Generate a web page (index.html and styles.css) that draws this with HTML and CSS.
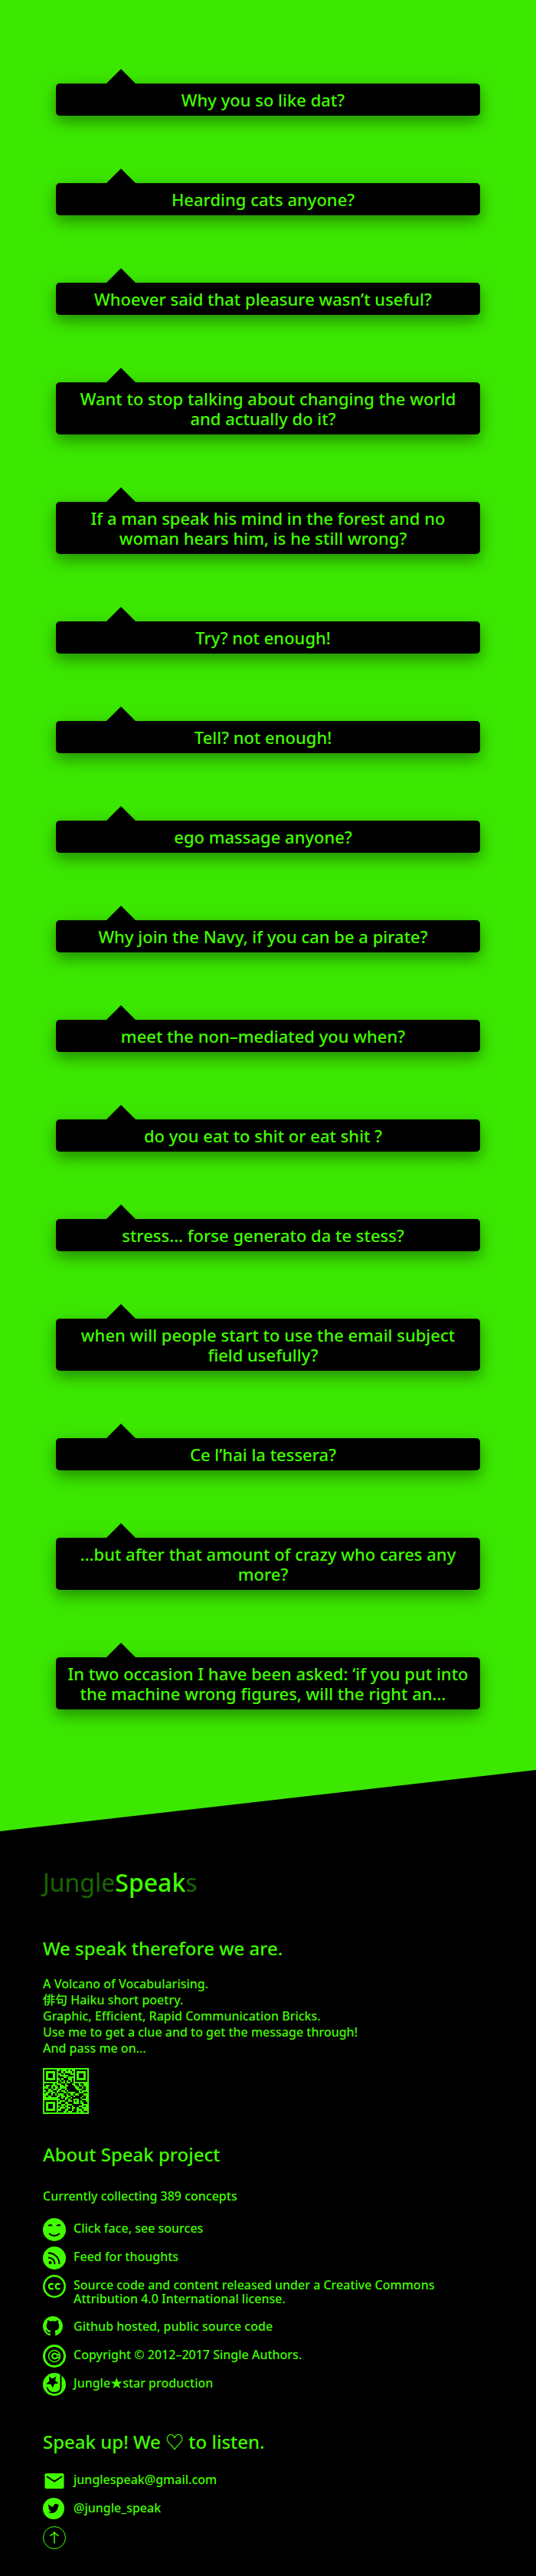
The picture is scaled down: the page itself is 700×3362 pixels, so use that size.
FILE: index.html
```html
<!DOCTYPE html>
<html lang="en">
<head>
<meta charset="utf-8">
<meta name="viewport" content="width=device-width, initial-scale=1">
<title>JungleSpeaks</title>
<link rel="stylesheet" href="styles.css">
</head>
<body>
<main class="speaks">
  <a class="bubble" href="#">Why you so like dat?</a>
  <a class="bubble" href="#">Hearding cats anyone?</a>
  <a class="bubble" href="#">Whoever said that pleasure wasn’t useful?</a>
  <a class="bubble" href="#">Want to stop talking about changing the world and actually do it?</a>
  <a class="bubble" href="#">If a man speak his mind in the forest and no woman hears him, is he still wrong?</a>
  <a class="bubble" href="#">Try? not enough!</a>
  <a class="bubble" href="#">Tell? not enough!</a>
  <a class="bubble" href="#">ego massage anyone?</a>
  <a class="bubble" href="#">Why join the Navy, if you can be a pirate?</a>
  <a class="bubble" href="#">meet the non–mediated you when?</a>
  <a class="bubble" href="#">do you eat to shit or eat shit ?</a>
  <a class="bubble" href="#">stress… forse generato da te stess?</a>
  <a class="bubble" href="#">when will people start to use the email subject field usefully?</a>
  <a class="bubble" href="#">Ce l’hai la tessera?</a>
  <a class="bubble" href="#">…but after that amount of crazy who cares any more?</a>
  <a class="bubble" href="#">In two occasion I have been asked: ‘if you put into the machine wrong figures, will the right an…</a>
</main>
<footer class="footer">
  <h1 class="logo">Jungle<span class="logo-strong">Speak</span>s</h1>

  <section class="section">
    <h2 class="title">We speak therefore we are.</h2>
    <p class="text">A Volcano of Vocabularising.<br>俳句 Haiku short poetry.<br>Graphic, Efficient, Rapid Communication Bricks.<br>Use me to get a clue and to get the message through!<br>And pass me on…</p>
    <svg class="qr" viewBox="0 0 27 27" role="img" aria-label="QR code">
      <rect class="fill" width="27" height="27"/>
      <g class="finder">
        <path d="M1.5 1.5h6v6h-6zM19.5 1.5h6v6h-6zM1.5 19.5h6v6h-6z"/>
        <path d="M3 4.5h3M21 4.5h3M3 22.5h3" stroke-width="3"/>
        <path d="M17.5 17.5h4v4h-4zM19 19.5h1"/>
      </g>
      <path class="modules" d="M10 1.5h1M14 1.5h1M16 1.5h1M9 2.5h2M12 2.5h1M17 2.5h1M11 3.5h1M13 3.5h3M9 4.5h1M15 4.5h3M9 5.5h3M14 5.5h1M10 6.5h1M12 6.5h3M17 6.5h1M9 7.5h1M11 7.5h1M13 7.5h1M15 7.5h1M17 7.5h1M9 8.5h2M13 8.5h1M16 8.5h2
      M1 9.5h5M7 9.5h1M11 9.5h2M14 9.5h3M19 9.5h2M22 9.5h2M1 10.5h1M4 10.5h1M8 10.5h2M12 10.5h1M15 10.5h3M20 10.5h1M23 10.5h1M3 11.5h2M6 11.5h1M9 11.5h1M14 11.5h5M21 11.5h2M24 11.5h1M1 12.5h2M5 12.5h1M8 12.5h1M11 12.5h2M14 12.5h6M23 12.5h2M2 13.5h1M6 13.5h2M10 13.5h1M13 13.5h1M15 13.5h6M22 13.5h1M1 14.5h1M4 14.5h1M7 14.5h1M9 14.5h3M14 14.5h1M19 14.5h2M24 14.5h2M3 15.5h2M6 15.5h1M8 15.5h1M12 15.5h2M15 15.5h1M18 15.5h1M21 15.5h3M2 16.5h1M5 16.5h3M10 16.5h1M13 16.5h1M16 16.5h2M19 16.5h4M24 16.5h1M9 17.5h2M12 17.5h1M15 17.5h1M23 17.5h2
      M10 18.5h3M14 18.5h1M16 18.5h1M22 18.5h1M9 19.5h1M13 19.5h2M23 19.5h2M11 20.5h2M15 20.5h2M24 20.5h2M9 21.5h2M13 21.5h1M22 21.5h1M10 22.5h1M12 22.5h1M15 22.5h2M18 22.5h3M24 22.5h1M9 23.5h1M13 23.5h1M16 23.5h1M19 23.5h1M21 23.5h2M11 24.5h2M15 24.5h2M18 24.5h2M23 24.5h1M9 25.5h3M14 25.5h1M17 25.5h3M21 25.5h1M24 25.5h2"/>
    </svg>
  </section>

  <section class="section">
    <h2 class="title">About Speak project</h2>
    <p class="text count">Currently collecting 389 concepts</p>
    <ul class="links">
      <li><a class="link" href="#">
        <svg class="icon" viewBox="0 0 30 30" aria-hidden="true"><circle class="fill" cx="15" cy="15" r="15"/><path class="cut" d="M7 10q3-2 5 0M18 10q3-2 5 0M8 20q7 6 14 0"/></svg>
        <span>Click face, see sources</span></a></li>
      <li><a class="link" href="#">
        <svg class="icon" viewBox="0 0 30 30" aria-hidden="true"><circle class="fill" cx="15" cy="15" r="15"/><circle cx="9.500" cy="21" r="2"/><path class="cut" d="M7 14.500a8 8 0 0 1 8.500 8.500M7 8.500a14 14 0 0 1 14.500 14.500"/></svg>
        <span>Feed for thoughts</span></a></li>
      <li><a class="link" href="#">
        <svg class="icon" viewBox="0 0 30 30" aria-hidden="true"><circle class="line" cx="15" cy="15" r="13.700" stroke-width="2.600"/><path class="line" stroke-width="2.400" d="M13.500 12.700a3.300 3.300 0 1 0 0 4.600M22.300 12.700a3.300 3.300 0 1 0 0 4.600"/></svg>
        <span>Source code and content released under a Creative Commons Attribution 4.0 International license.</span></a></li>
      <li><a class="link" href="#">
        <svg class="icon icon-small" viewBox="0 0 16 16" aria-hidden="true"><path class="fill" d="M8 0C3.580 0 0 3.580 0 8c0 3.540 2.290 6.530 5.470 7.590.4.070.55-.17.55-.38 0-.19-.01-.82-.01-1.490-2.010.37-2.530-.49-2.690-.94-.09-.23-.48-.94-.82-1.130-.28-.15-.68-.52-.01-.53.63-.01 1.080.58 1.230.82.72 1.210 1.870.87 2.330.66.07-.52.28-.87.51-1.070-1.780-.2-3.640-.89-3.640-3.950 0-.87.31-1.590.82-2.150-.08-.2-.36-1.020.08-2.120 0 0 .67-.21 2.200.82.64-.18 1.320-.27 2-.27s1.360.09 2 .27c1.530-1.040 2.200-.82 2.200-.82.44 1.100.16 1.920.08 2.120.51.56.82 1.270.82 2.150 0 3.070-1.870 3.750-3.650 3.950.29.25.54.73.54 1.480 0 1.070-.01 1.930-.01 2.200 0 .21.15.46.55.38A8.010 8.010 0 0 0 16 8c0-4.420-3.580-8-8-8z"/></svg>
        <span>Github hosted, public source code</span></a></li>
      <li><a class="link" href="#">
        <svg class="icon" viewBox="0 0 30 30" aria-hidden="true"><circle class="line" cx="15" cy="15" r="13.500" stroke-width="3"/><circle class="line" cx="15" cy="15" r="7.500" stroke-width="1.500"/><path class="line" stroke-width="2.200" d="M21.500 13.300h-3.200a3.300 3.300 0 1 0 0 3.400h3.200"/></svg>
        <span>Copyright © 2012–2017 Single Authors.</span></a></li>
      <li><a class="link" href="#">
        <svg class="icon" viewBox="0 0 30 30" aria-hidden="true"><circle class="fill" cx="15" cy="15" r="15"/><path d="M8 4.500l4.200 3 5.300-3-1.500 5.500 4.500 3.500-5.500.8-2 5.200-2.500-4.800-6.500-.2 4.500-4z"/><path class="cut" stroke-width="3" d="M23.500 1v17.500c0 5-3.500 7.500-8.500 7.500s-9-3-9.500-7.500"/></svg>
        <span>Jungle★star production</span></a></li>
    </ul>
  </section>

  <section class="section">
    <h2 class="title">Speak up! We ♡ to listen.</h2>
    <ul class="links">
      <li><a class="link" href="#">
        <svg class="icon" viewBox="0 0 30 30" aria-hidden="true"><rect class="fill" x="2.500" y="5" width="25" height="20" rx="2"/><path class="cut" d="M5 9l10 6.500L25 9"/></svg>
        <span>junglespeak@gmail.com</span></a></li>
      <li><a class="link" href="#">
        <svg class="icon icon-medium" viewBox="0 0 28 28" aria-hidden="true"><circle class="fill" cx="14" cy="14" r="14"/><path transform="translate(6.500 6.500) scale(.62)" d="M23.953 4.570a10 10 0 0 1-2.825.775 4.958 4.958 0 0 0 2.163-2.723c-.951.555-2.005.959-3.127 1.184a4.920 4.920 0 0 0-8.384 4.482C7.690 8.095 4.067 6.130 1.640 3.162a4.822 4.822 0 0 0-.666 2.475c0 1.710.87 3.213 2.188 4.096a4.904 4.904 0 0 1-2.228-.616v.06a4.923 4.923 0 0 0 3.946 4.827 4.996 4.996 0 0 1-2.212.085 4.936 4.936 0 0 0 4.604 3.417 9.867 9.867 0 0 1-6.102 2.105c-.39 0-.779-.023-1.170-.067a13.995 13.995 0 0 0 7.557 2.209c9.053 0 13.998-7.496 13.998-13.985 0-.21 0-.42-.015-.63A9.935 9.935 0 0 0 24 4.590z"/></svg>
        <span>@jungle_speak</span></a></li>
      <li><a class="link" href="#" aria-label="Back to top">
        <svg class="icon" viewBox="0 0 30 30" aria-hidden="true"><circle class="line" cx="15" cy="15" r="14.500"/><path class="line" stroke-width="1.500" d="M15 22.500V8M9.500 12.500C12 11 14 10 15 8c1 2 3 3 5.500 4.500"/></svg></a></li>
    </ul>
  </section>
</footer>
</body>
</html>
```
FILE: styles.css
```css
:root {
  --green: #3ce800;
  --bright: #42ff00;
  --dim: #1a6600;
}

* {
  box-sizing: border-box;
}

body {
  margin: 0;
  background: var(--green);
  color: var(--bright);
  font-family: "Noto Sans", "Noto Sans CJK JP", "DejaVu Sans", sans-serif;
  font-size: 16px;
  font-weight: 500;
}

.speaks {
  display: flex;
  flex-direction: column;
  gap: 88px;
  padding: 109px 73px 79px;
}

.bubble {
  position: relative;
  padding: 8px 12px;
  border-radius: 5px;
  background: #000;
  box-shadow: 0 8px 17px rgba(0, 0, 0, .3), 0 6px 30px rgba(0, 0, 0, .12);
  color: var(--bright);
  font-size: 22px;
  line-height: 26px;
  text-align: center;
  text-decoration: none;
}

.bubble::before {
  content: "";
  position: absolute;
  left: 66px;
  bottom: 100%;
  border: 19px solid transparent;
  border-top-width: 0;
  border-bottom-color: #000;
}

.bubble::after {
  content: "";
  padding-right: 13px;
}

.footer {
  padding: 124px 56px 28px;
  background: #000;
  clip-path: polygon(0 80px, 100% 0, 100% 100%, 0 100%);
}

.logo {
  margin: 0 0 10px;
  color: var(--dim);
  font-size: 32px;
  font-weight: 400;
  line-height: 46px;
}

.logo-strong {
  color: var(--bright);
  font-weight: 500;
}

.section {
  padding-top: 35px;
}

.title {
  margin: 0 0 18px;
  font-size: 24px;
  font-weight: 500;
  line-height: 36px;
}

.text {
  margin: 0 0 15px;
  line-height: 21px;
}

.count {
  margin: 26px 0 18px;
}

.qr {
  display: block;
  width: 60px;
  height: 60px;
  shape-rendering: crispEdges;
}

.finder,
.modules {
  fill: none;
  stroke: #000;
}

.links {
  display: flex;
  flex-direction: column;
  gap: 7px;
  margin: 0 0 7px;
  padding: 0;
  list-style: none;
}

.link {
  display: grid;
  grid-template-columns: 30px 1fr;
  column-gap: 10px;
  min-height: 30px;
  color: var(--bright);
  line-height: 18px;
  text-decoration: none;
}

.link span {
  padding: 4px 0 7px;
}

.icon {
  width: 30px;
  height: 30px;
}

.icon-small {
  width: 26px;
  height: 26px;
}

.icon-medium {
  width: 28px;
  height: 28px;
}

.fill {
  fill: var(--bright);
}

.line {
  fill: none;
  stroke: var(--bright);
}

.cut {
  fill: none;
  stroke: #000;
  stroke-width: 2px;
}
```
